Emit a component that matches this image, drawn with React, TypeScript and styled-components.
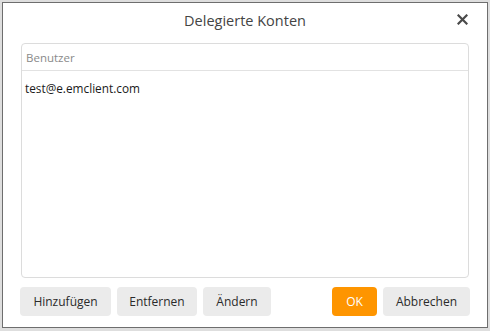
import React from "react";
import styled, { createGlobalStyle } from "styled-components";

const Global = createGlobalStyle`
  html, body { margin: 0; padding: 0; background: #e2e2e2; }
  body { font-family: "Open Sans", "Noto Sans", sans-serif; }
`;

const Frame = styled.div`
  width: 490px;
  height: 331px;
  box-sizing: border-box;
  padding: 2px 2px 3px 2px;
  background: #dedede;
`;

const Dialog = styled.div`
  height: 100%;
  box-sizing: border-box;
  border: 1px solid #6e6e6e;
  background: #fff;
  display: flex;
  flex-direction: column;
  padding: 0 17px 11px 17px;
`;

const TitleBar = styled.div`
  position: relative;
  height: 40px;
  display: flex;
  align-items: center;
  justify-content: center;
`;

const Title = styled.div`
  font-size: 14.5px;
  color: #444;
  margin-top: -5px;
`;

const Close = styled.button`
  position: absolute;
  right: 0;
  top: 8px;
  width: 16px;
  height: 16px;
  padding: 0;
  border: 0;
  background: transparent;
  display: flex;
  align-items: center;
  justify-content: center;
`;

const List = styled.div`
  flex: 1;
  margin: 0 1px;
  border: 1px solid #dcdcdc;
  border-radius: 4px;
  display: flex;
  flex-direction: column;
`;

const Header = styled.div`
  height: 26px;
  border-bottom: 1px solid #e2e2e2;
  display: flex;
  align-items: center;
  padding-left: 4px;
  font-size: 11.5px;
  color: #8a8a8a;
`;

const Row = styled.div`
  height: 34px;
  display: flex;
  align-items: center;
  padding-left: 3px;
  font-size: 11.8px;
  color: #1a1a1a;
`;

const Footer = styled.div`
  display: flex;
  gap: 6px;
  margin-top: 9px;
`;

const Spacer = styled.div`
  flex: 1;
`;

const Button = styled.button<{ $primary?: boolean; $w: number }>`
  width: ${(p) => p.$w}px;
  height: 29px;
  border: 0;
  border-radius: 4px;
  background: ${(p) => (p.$primary ? "#fe9500" : "#ebebeb")};
  color: ${(p) => (p.$primary ? "#fff" : "#2a2a2a")};
  font-family: inherit;
  font-size: 12px;
  padding: 0;
`;

export default function App() {
  return (
    <>
      <Global />
      <Frame>
        <Dialog>
          <TitleBar>
            <Title>Delegierte Konten</Title>
            <Close aria-label="Schließen">
              <svg width="11" height="11" viewBox="0 0 11 11">
                <path d="M1.5 1.5 L9.5 9.5 M9.5 1.5 L1.5 9.5" stroke="#4a4a4a" strokeWidth="2.2" strokeLinecap="square" />
              </svg>
            </Close>
          </TitleBar>
          <List>
            <Header>Benutzer</Header>
            <Row>test@e.emclient.com</Row>
          </List>
          <Footer>
            <Button $w={91}>Hinzufügen</Button>
            <Button $w={80}>Entfernen</Button>
            <Button $w={68}>Ändern</Button>
            <Spacer />
            <Button $primary $w={45}>OK</Button>
            <Button $w={87}>Abbrechen</Button>
          </Footer>
        </Dialog>
      </Frame>
    </>
  );
}
